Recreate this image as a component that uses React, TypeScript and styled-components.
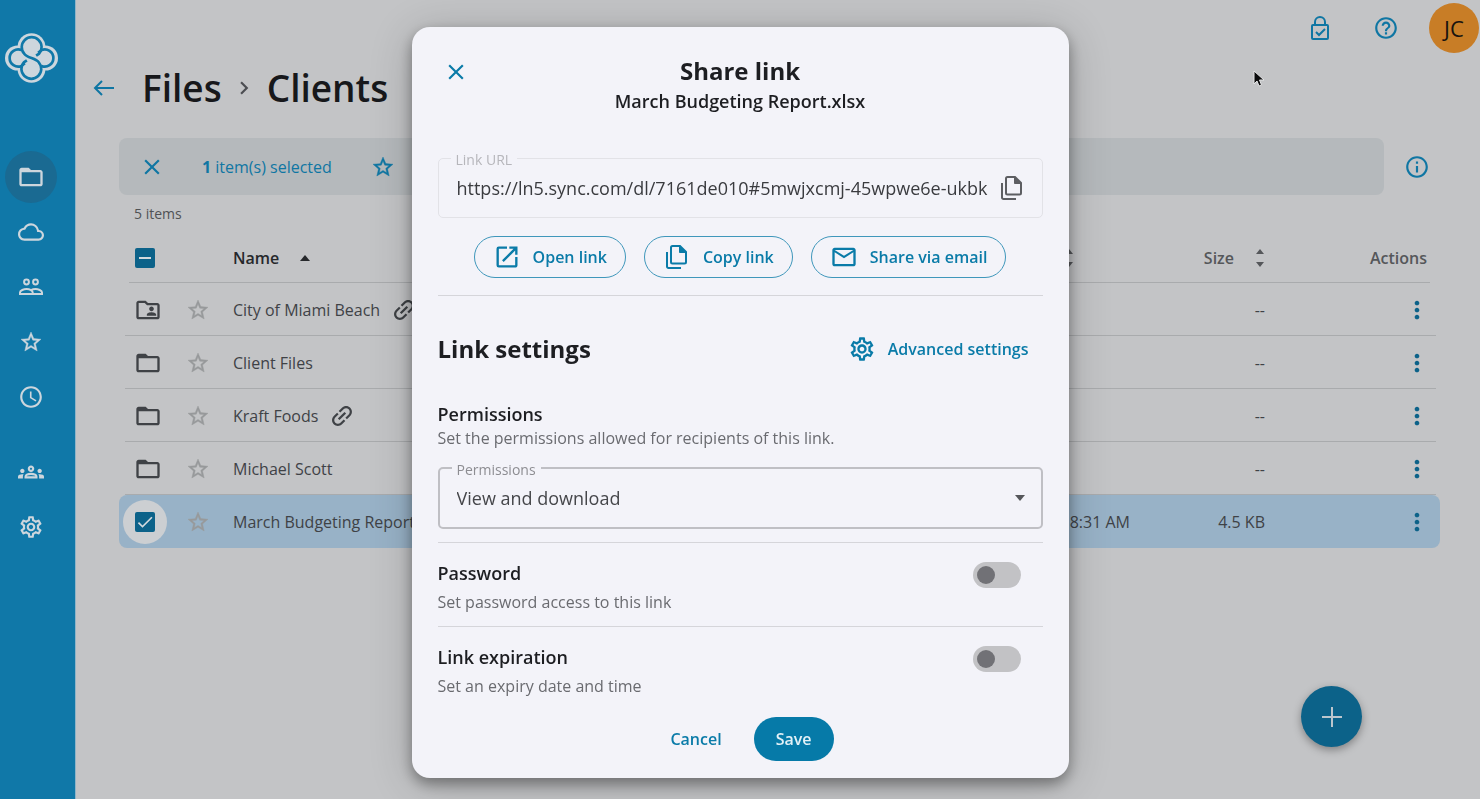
import React from "react";
import styled, { createGlobalStyle, css } from "styled-components";
import {
  MdAccessTime,
  MdCheck,
  MdChevronRight,
  MdClose,
  MdFolderOpen,
  MdHelpOutline,
  MdInfoOutline,
  MdLink,
  MdMailOutline,
  MdMoreVert,
  MdOpenInNew,
  MdOutlineCloud,
  MdOutlineFolderShared,
  MdOutlineGroups,
  MdOutlineSettings,
} from "react-icons/md";

const color = {
  page: "#c3c4c6",
  bar: "#b5b9bc",
  rail: "#1078a8",
  railActive: "#1a6a92",
  railInk: "#cdd6dd",
  accentDim: "#0f76a3",
  solidDim: "#0c6289",
  inkDim: "#3f4246",
  starDim: "#97999b",
  lineDim: "#a9abad",
  rowSelected: "#98b2c7",
  surface: "#f3f3f9",
  accent: "#0a7ba8",
  accentLine: "#3f97bb",
  ink: "#1d1e22",
  muted: "#6a6b70",
  line: "#d5d5da",
};

const GlobalStyle = createGlobalStyle`
  *, *::before, *::after { box-sizing: border-box; }
  body {
    margin: 0;
    background: ${color.page};
    color: ${color.inkDim};
    font-family: "Open Sans", "Noto Sans", sans-serif;
    font-size: 16px;
    line-height: 24px;
  }
  button, input, select { font: inherit; }
  svg { display: block; flex: none; }
`;

const Shell = styled.div`
  display: flex;
  min-height: 100vh;
`;

/* ---------- navigation rail ---------- */

const Rail = styled.aside`
  flex: none;
  width: 76px;
  padding: 33px 0 0 5px;
  background: ${color.rail};
  border-right: 1px solid #8fb4c8;
`;

const LogoLink = styled.a`
  display: block;
  width: 53px;
  height: 50px;
`;

const RailNav = styled.nav<{ $top: number }>`
  display: flex;
  flex-direction: column;
  gap: 3px;
  width: 52px;
  margin-top: ${(p) => p.$top}px;
`;

const RailLink = styled.a<{ $active?: boolean }>`
  display: grid;
  place-items: center;
  width: 52px;
  height: 52px;
  border-radius: 50%;
  color: ${color.railInk};
  background: ${(p) => (p.$active ? color.railActive : "transparent")};
`;

/* ---------- main area ---------- */

const Main = styled.main`
  flex: 1;
  min-width: 0;
  padding: 0 0 40px;
`;

const Header = styled.header`
  display: flex;
  justify-content: space-between;
  align-items: flex-start;
`;

const Crumbs = styled.nav`
  display: flex;
  align-items: center;
  padding: 62px 0 0 14px;
`;

const Crumb = styled.a`
  color: #17181b;
  font-size: 37px;
  font-weight: 600;
  line-height: 52px;
  text-decoration: none;
`;

const CrumbArrow = styled.span`
  display: grid;
  place-items: center;
  width: 45px;
  color: #4c4e52;
`;

const HeaderTools = styled.div`
  display: flex;
  align-items: center;
  gap: 39px;
  padding-top: 3px;
`;

const IconButton = styled.button<{ $tone?: string }>`
  display: grid;
  place-items: center;
  padding: 0;
  border: 0;
  background: none;
  color: ${(p) => p.$tone ?? color.accentDim};
  cursor: pointer;
`;

const BackButton = styled(IconButton)`
  margin-right: 24px;
`;

const Avatar = styled.button`
  width: 50px;
  height: 50px;
  margin: 0 1px 0 -9px;
  padding: 0;
  border: 0;
  border-radius: 50%;
  background: #c87d26;
  color: #17130f;
  font-size: 22px;
`;

const SelectionRow = styled.div`
  display: flex;
  align-items: center;
  gap: 20px;
  padding: 24px 50px 0 43px;
`;

const SelectionBar = styled.div`
  display: flex;
  flex: 1;
  align-items: center;
  height: 57px;
  padding: 0 20px;
  border-radius: 8px;
  background: ${color.bar};
  color: ${color.accentDim};
`;

const SelectionText = styled.p`
  margin: 0 39px 0 37px;
`;

const ItemCount = styled.p`
  margin: 9px 0 9px 58px;
  font-size: 14px;
  line-height: 20px;
  color: #505255;
`;

const TableWrap = styled.div`
  padding: 0 40px 0 43px;
`;

const Table = styled.table`
  width: 100%;
  table-layout: fixed;
  border-collapse: collapse;
`;

const Row = styled.tr<{ $selected?: boolean; $head?: boolean; $last?: boolean }>`
  position: relative;
  height: ${(p) => (p.$head ? 50 : 53)}px;

  ${(p) =>
    p.$selected &&
    css`
      td { background: ${color.rowSelected}; }
      td:first-child { border-radius: 8px 0 0 8px; }
      td:last-child { border-radius: 0 8px 8px 0; }
    `}

  ${(p) =>
    !p.$last &&
    css`
      > :first-child::after {
        content: "";
        position: absolute;
        left: ${p.$head ? 10 : 6}px;
        right: ${p.$head ? 10 : 4}px;
        bottom: 0;
        height: 1px;
        background: ${color.lineDim};
      }
    `}
`;

const HeadCell = styled.th<{ $w?: number; $pad?: string; $strong?: boolean }>`
  width: ${(p) => (p.$w ? `${p.$w}px` : "auto")};
  padding: ${(p) => p.$pad ?? "0"};
  font-weight: 600;
  color: ${(p) => (p.$strong ? "#26282b" : "#55575a")};
  text-align: left;
`;

const Cell = styled.td<{ $pad?: string; $right?: boolean }>`
  padding: ${(p) => p.$pad ?? "0"};
  text-align: ${(p) => (p.$right ? "right" : "left")};
  white-space: nowrap;
`;

const CellLine = styled.div<{ $gap?: number; $end?: boolean }>`
  display: flex;
  align-items: center;
  gap: ${(p) => p.$gap ?? 0}px;
  justify-content: ${(p) => (p.$end ? "flex-end" : "flex-start")};
`;

const LinkMark = styled(MdLink)`
  transform: rotate(-45deg);
`;

const Tick = styled.label<{ $halo?: boolean }>`
  display: grid;
  place-items: center;
  width: 44px;
  height: 44px;
  margin-left: 4px;
  border-radius: 50%;
  background: ${(p) => (p.$halo ? "#cccfd2" : "transparent")};
  color: #d3dade;

  > * { grid-area: 1 / 1; }
`;

const TickInput = styled.input`
  appearance: none;
  width: 20px;
  height: 20px;
  margin: 0;
  border-radius: 2px;
  background: ${color.solidDim};
`;

const TickGlyph = styled.span`
  pointer-events: none;
`;

const Fab = styled.button`
  position: fixed;
  right: 118px;
  bottom: 52px;
  display: grid;
  place-items: center;
  width: 61px;
  height: 61px;
  padding: 0;
  border: 0;
  border-radius: 50%;
  background: ${color.solidDim};
  color: #bcc6cd;
  box-shadow: 0 3px 8px rgba(0, 0, 0, 0.35);
`;

const Pointer = styled.svg`
  position: fixed;
  top: 70px;
  right: 215px;
  z-index: 3;
`;

/* ---------- dialog ---------- */

const Overlay = styled.div`
  position: fixed;
  inset: 0;
  z-index: 2;
  display: flex;
  justify-content: center;
  align-items: flex-start;
  padding: 27px 16px 21px;
  overflow: auto;
`;

const Dialog = styled.section`
  width: 100%;
  max-width: 657px;
  padding: 30px 26px 17px;
  border-radius: 18px;
  background: ${color.surface};
  color: ${color.ink};
  box-shadow: 0 6px 14px rgba(0, 0, 0, 0.36), 0 6px 44px rgba(0, 0, 0, 0.2);
`;

const DialogHead = styled.header`
  display: grid;
  grid-template-columns: 36px 1fr 36px;
  align-items: start;
  text-align: center;
`;

const CloseButton = styled(IconButton)`
  width: 36px;
  height: 30px;
`;

const DialogTitle = styled.h2`
  margin: 0;
  font-size: 24px;
  font-weight: 700;
  line-height: 28px;
`;

const FileName = styled.p`
  margin: 4px 0 34px;
  font-size: 18px;
  font-weight: 600;
  line-height: 24px;
`;

const Field = styled.fieldset<{ $quiet?: boolean }>`
  min-width: 0;
  margin: 0;
  padding: 0 16px 17px;
  border: ${(p) => (p.$quiet ? "1px solid #e2e2e7" : "2px solid #bfbfc4")};
  border-radius: 5px;
`;

const Legend = styled.legend<{ $quiet?: boolean }>`
  margin-left: -4px;
  padding: 4px 5px 0;
  font-size: 14px;
  line-height: 18px;
  color: ${(p) => (p.$quiet ? "#b6b6bb" : "#8d8d92")};
`;

const FieldLine = styled.div`
  display: flex;
  align-items: center;
  gap: 8px;
  margin-top: 7px;
  height: 24px;
`;

const UrlInput = styled.input`
  flex: 1;
  min-width: 0;
  padding: 0 0 0 2px;
  border: 0;
  outline: 0;
  background: none;
  color: #3a3b3f;
  font-size: 18px;
`;

const Select = styled.select`
  flex: 1;
  appearance: none;
  padding: 0 0 0 1px;
  border: 0;
  outline: 0;
  background: none;
  color: #45464a;
  font-size: 18px;
`;

const Actions = styled.div`
  display: flex;
  justify-content: center;
  gap: 18px;
  padding: 18px 0 17px;
  border-bottom: 1px solid ${color.line};
`;

const PillButton = styled.button`
  display: flex;
  align-items: center;
  gap: 12px;
  height: 42px;
  padding: 0 18px;
  border: 1px solid ${color.accentLine};
  border-radius: 21px;
  background: none;
  color: ${color.accent};
  font-weight: 600;
`;

const SettingsHead = styled.div`
  display: flex;
  justify-content: space-between;
  align-items: center;
  padding: 39px 14px 0 0;
`;

const TextButton = styled.button<{ $padded?: boolean }>`
  display: flex;
  align-items: center;
  gap: 12px;
  padding: 0 ${(p) => (p.$padded ? 24 : 0)}px;
  border: 0;
  background: none;
  color: ${color.accent};
  font-weight: 600;
`;

const SectionTitle = styled.h3`
  display: block;
  margin: 0;
  font-size: 18px;
  font-weight: 600;
  line-height: 24px;
`;

const SectionNote = styled.p<{ $top?: number }>`
  margin: ${(p) => p.$top ?? 0}px 0 0;
  color: ${color.muted};
`;

const PermissionBlock = styled.section`
  padding: 39px 0 13px;
  border-bottom: 1px solid ${color.line};
`;

const PermissionField = styled.div`
  padding-top: 7px;
`;

const SettingRow = styled.section<{ $divided?: boolean }>`
  display: flex;
  justify-content: space-between;
  align-items: flex-start;
  padding: 18px 22px ${(p) => (p.$divided ? 12 : 19)}px 0;
  border-bottom: ${(p) => (p.$divided ? `1px solid ${color.line}` : "0")};
`;

const Switch = styled.input`
  appearance: none;
  display: flex;
  align-items: center;
  width: 48px;
  height: 26px;
  margin: 1px 0 0;
  padding: 0 4px;
  border-radius: 13px;
  background: #c2c2c5;

  &::before {
    content: "";
    width: 18px;
    height: 18px;
    border-radius: 50%;
    background: #717176;
  }
`;

const DialogFooter = styled.footer`
  display: flex;
  justify-content: center;
  gap: 8px;
`;

const SaveButton = styled.button`
  height: 44px;
  min-width: 80px;
  padding: 0 20px;
  border: 0;
  border-radius: 22px;
  background: #067aa8;
  color: #e3f1f7;
  font-weight: 600;
`;

/* ---------- drawings ---------- */

const Logo = () => (
  <svg width="53" height="50" viewBox="0 0 160 150" aria-hidden="true">
    <g fill={color.railInk}>
      <circle cx="80" cy="42" r="42" />
      <circle cx="80" cy="108" r="42" />
      <circle cx="38" cy="75" r="38" />
      <circle cx="122" cy="75" r="38" />
    </g>
    <g fill="none" stroke={color.rail} strokeWidth="8">
      <path d="M94 68 L103 62 A30 30 0 1 0 58 62 C68 76 92 74 102 88 A30 30 0 1 1 57 88 L66 82" />
      <path d="M50 51 A26 26 0 1 0 50 99" />
      <path d="M110 99 A26 26 0 1 0 110 51" />
      <path d="M50 99 L60 91 M110 51 L100 59" />
    </g>
  </svg>
);

const Star = ({ size = 24 }: { size?: number }) => (
  <svg width={size} height={size} viewBox="0 0 24 24" fill="currentColor" stroke="currentColor" strokeWidth="0.4" aria-hidden="true">
    <path d="M22 9.240l-7.190-.62L12 2 9.190 8.630 2 9.240l5.460 4.730L5.820 21 12 17.270 18.180 21l-1.630-7.030L22 9.240zM12 15.400l-3.760 2.270 1-4.280-3.320-2.880 4.380-.38L12 6.100l1.710 4.040 4.380.38-3.320 2.880 1 4.280L12 15.400z" />
  </svg>
);

const People = ({ size = 28 }: { size?: number }) => (
  <svg width={size} height={size} viewBox="0 0 28 28" fill="none" stroke="currentColor" strokeWidth="2" aria-hidden="true">
    <circle cx="9.500" cy="9" r="2.400" />
    <circle cx="18.500" cy="9" r="2.400" />
    <path d="M3 21v-1.500c0-2 4-3.500 6.500-3.500 1.800 0 3.300.5 4.500 1.200 1.200-.7 2.700-1.200 4.500-1.200 2.500 0 6.500 1.500 6.500 3.500V21z" />
    <path d="M14 17.200c1 .6 1.700 1.400 1.700 2.300V21" />
  </svg>
);

const ArrowLeft = () => (
  <svg width="28" height="28" viewBox="0 0 28 28" fill="none" stroke="currentColor" strokeWidth="2" aria-hidden="true">
    <path d="M24 14H5.500M12 7l-7 7 7 7" />
  </svg>
);

const CopyFile = () => (
  <svg width="28" height="28" viewBox="0 0 28 28" fill="none" stroke="currentColor" strokeWidth="2" aria-hidden="true">
    <path d="M9.500 3H17l6 6v10a1.500 1.500 0 0 1-1.500 1.500h-12A1.500 1.500 0 0 1 8 19V4.500A1.500 1.500 0 0 1 9.500 3z" />
    <path d="M16.500 3v6.500H23z" fill="currentColor" strokeWidth="1" />
    <path d="M4 9v14.500A1.500 1.500 0 0 0 5.500 25h12.500" />
  </svg>
);

const LockCheck = () => (
  <svg width="28" height="28" viewBox="0 0 28 28" fill="none" stroke="currentColor" strokeWidth="2" aria-hidden="true">
    <rect x="6" y="11" width="16" height="14" rx="1" />
    <path d="M9 11V8a5 5 0 0 1 10 0v3" />
    <path d="M10 18l3 3 6-6" />
  </svg>
);

const SortIcon = () => (
  <svg width="10" height="20" viewBox="0 0 10 20" fill="currentColor" aria-hidden="true">
    <path d="M1 6L5 1l4 5z M1 14l4 5 4-5z" />
  </svg>
);

const SortUp = () => (
  <svg width="10" height="6" viewBox="0 0 10 6" fill="currentColor" aria-hidden="true">
    <path d="M0 6L5 0l5 6z" />
  </svg>
);

const Caret = () => (
  <svg width="10" height="6" viewBox="0 0 10 6" fill="#55565a" aria-hidden="true">
    <path d="M0 0h10L5 6z" />
  </svg>
);

/* ---------- data ---------- */

type FileItem = {
  name: string;
  kind: "folder" | "shared" | "file";
  linked?: boolean;
  modified?: string;
  size: string;
};

const files: FileItem[] = [
  { name: "City of Miami Beach", kind: "shared", linked: true, size: "--" },
  { name: "Client Files", kind: "folder", size: "--" },
  { name: "Kraft Foods", kind: "folder", linked: true, size: "--" },
  { name: "Michael Scott", kind: "folder", size: "--" },
  { name: "March Budgeting Report.xlsx", kind: "file", modified: "8:31 AM", size: "4.5 KB" },
];

const primaryNav = [
  { label: "Files", icon: MdFolderOpen, size: 28, active: true },
  { label: "Vault", icon: MdOutlineCloud, size: 26 },
  { label: "Shared", icon: People, size: 28 },
  { label: "Starred", icon: Star, size: 24 },
  { label: "Recent", icon: MdAccessTime, size: 26 },
];

const secondaryNav = [
  { label: "Team", icon: MdOutlineGroups, size: 26 },
  { label: "Settings", icon: MdOutlineSettings, size: 26 },
];

const FileRow = ({ item, last }: { item: FileItem; last: boolean }) => {
  const selected = item.kind === "file";
  return (
    <Row $selected={selected} $last={last}>
      {selected ? (
        <Cell>
          <Tick $halo>
            <TickInput type="checkbox" defaultChecked aria-label={`Select ${item.name}`} />
            <TickGlyph>
              <MdCheck size={20} />
            </TickGlyph>
          </Tick>
        </Cell>
      ) : (
        <Cell $pad="0 0 0 15px">
          {item.kind === "shared" ? <MdOutlineFolderShared size={28} /> : <MdFolderOpen size={28} />}
        </Cell>
      )}
      <Cell $pad="0 0 0 14px">
        <IconButton $tone={color.starDim} aria-label={`Star ${item.name}`}>
          <Star />
        </IconButton>
      </Cell>
      <Cell>
        <CellLine $gap={10}>
          {item.name}
          {item.linked && <LinkMark size={28} />}
        </CellLine>
      </Cell>
      <Cell $right>{item.modified}</Cell>
      <Cell $right>{item.size}</Cell>
      <Cell $pad="0 9px 0 0">
        <CellLine $end>
          <IconButton $tone={color.solidDim} aria-label={`Actions for ${item.name}`}>
            <MdMoreVert size={28} />
          </IconButton>
        </CellLine>
      </Cell>
    </Row>
  );
};

export default function App() {
  return (
    <>
      <GlobalStyle />
      <Shell>
        <Rail>
          <LogoLink href="#home" aria-label="Home">
            <Logo />
          </LogoLink>
          <RailNav $top={68} aria-label="Primary">
            {primaryNav.map(({ label, icon: Icon, active, size }) => (
              <RailLink key={label} href="#nav" aria-label={label} $active={active}>
                <Icon size={size} />
              </RailLink>
            ))}
          </RailNav>
          <RailNav $top={23} aria-label="Secondary">
            {secondaryNav.map(({ label, icon: Icon, size }) => (
              <RailLink key={label} href="#nav" aria-label={label}>
                <Icon size={size} />
              </RailLink>
            ))}
          </RailNav>
        </Rail>

        <Main>
          <Header>
            <Crumbs aria-label="Breadcrumb">
              <BackButton aria-label="Back">
                <ArrowLeft />
              </BackButton>
              <Crumb href="#files">Files</Crumb>
              <CrumbArrow>
                <MdChevronRight size={26} />
              </CrumbArrow>
              <Crumb href="#clients">Clients</Crumb>
            </Crumbs>
            <HeaderTools>
              <IconButton aria-label="Privacy">
                <LockCheck />
              </IconButton>
              <IconButton aria-label="Help">
                <MdHelpOutline size={26} />
              </IconButton>
              <Avatar>JC</Avatar>
            </HeaderTools>
          </Header>

          <SelectionRow>
            <SelectionBar>
              <IconButton aria-label="Clear selection">
                <MdClose size={26} />
              </IconButton>
              <SelectionText>
                <b>1</b> item(s) selected
              </SelectionText>
              <IconButton aria-label="Star">
                <Star />
              </IconButton>
            </SelectionBar>
            <IconButton aria-label="Details">
              <MdInfoOutline size={26} />
            </IconButton>
          </SelectionRow>

          <ItemCount>5 items</ItemCount>

          <TableWrap>
            <Table>
              <thead>
                <Row $head>
                  <HeadCell $w={53}>
                    <Tick>
                      <TickInput type="checkbox" aria-label="Select all" />
                      <TickGlyph>
                        <svg width="12" height="2" viewBox="0 0 12 2" aria-hidden="true">
                          <path d="M0 0h12v2H0z" fill="currentColor" />
                        </svg>
                      </TickGlyph>
                    </Tick>
                  </HeadCell>
                  <HeadCell $w={61} />
                  <HeadCell $strong>
                    <CellLine $gap={21}>
                      Name <SortUp />
                    </CellLine>
                  </HeadCell>
                  <HeadCell $w={160} $pad="0 56px 0 0">
                    <CellLine $end>
                      <SortIcon />
                    </CellLine>
                  </HeadCell>
                  <HeadCell $w={135}>
                    <CellLine $gap={21} $end>
                      Size <SortIcon />
                    </CellLine>
                  </HeadCell>
                  <HeadCell $w={175} $pad="0 13px 0 0">
                    <CellLine $end>Actions</CellLine>
                  </HeadCell>
                </Row>
              </thead>
              <tbody>
                {files.map((item, i) => (
                  <FileRow key={item.name} item={item} last={i === files.length - 1} />
                ))}
              </tbody>
            </Table>
          </TableWrap>
        </Main>
      </Shell>

      <Fab aria-label="Add">
        <svg width="22" height="22" viewBox="0 0 22 22" stroke="currentColor" strokeWidth="2" aria-hidden="true">
          <path d="M11 1v20M1 11h20" />
        </svg>
      </Fab>

      <Overlay>
        <Dialog role="dialog" aria-modal="true" aria-labelledby="share-title">
          <DialogHead>
            <CloseButton $tone={color.accent} aria-label="Close">
              <MdClose size={26} />
            </CloseButton>
            <div>
              <DialogTitle id="share-title">Share link</DialogTitle>
              <FileName>March Budgeting Report.xlsx</FileName>
            </div>
          </DialogHead>

          <Field $quiet>
            <Legend $quiet>
              <label htmlFor="link-url">Link URL</label>
            </Legend>
            <FieldLine>
              <UrlInput id="link-url" readOnly value="https://ln5.sync.com/dl/7161de010#5mwjxcmj-45wpwe6e-ukbk" />
              <IconButton $tone="#5d5e62" aria-label="Copy link URL">
                <CopyFile />
              </IconButton>
            </FieldLine>
          </Field>

          <Actions>
            <PillButton>
              <MdOpenInNew size={28} />
              Open link
            </PillButton>
            <PillButton>
              <CopyFile />
              Copy link
            </PillButton>
            <PillButton>
              <MdMailOutline size={28} />
              Share via email
            </PillButton>
          </Actions>

          <SettingsHead>
            <DialogTitle as="h3">Link settings</DialogTitle>
            <TextButton>
              <MdOutlineSettings size={28} />
              Advanced settings
            </TextButton>
          </SettingsHead>

          <PermissionBlock>
            <SectionTitle>Permissions</SectionTitle>
            <SectionNote>Set the permissions allowed for recipients of this link.</SectionNote>
            <PermissionField>
              <Field>
                <Legend>
                  <label htmlFor="permissions">Permissions</label>
                </Legend>
                <FieldLine>
                  <Select id="permissions" defaultValue="View and download">
                    <option>View and download</option>
                  </Select>
                  <Caret />
                </FieldLine>
              </Field>
            </PermissionField>
          </PermissionBlock>

          <SettingRow $divided>
            <div>
              <SectionTitle as="label" htmlFor="password">Password</SectionTitle>
              <SectionNote $top={5}>Set password access to this link</SectionNote>
            </div>
            <Switch type="checkbox" role="switch" id="password" />
          </SettingRow>

          <SettingRow>
            <div>
              <SectionTitle as="label" htmlFor="expiration">Link expiration</SectionTitle>
              <SectionNote $top={5}>Set an expiry date and time</SectionNote>
            </div>
            <Switch type="checkbox" role="switch" id="expiration" />
          </SettingRow>

          <DialogFooter>
            <TextButton $padded>Cancel</TextButton>
            <SaveButton>Save</SaveButton>
          </DialogFooter>
        </Dialog>
      </Overlay>

      <Pointer width="12" height="18" viewBox="0 0 12 18" aria-hidden="true">
        <path
          d="M1 1v13l3-3 2 5 2.500-1-2-5H11z"
          fill="#0c0c0d"
          stroke="#e4e5e6"
          strokeWidth="1"
        />
      </Pointer>
    </>
  );
}
